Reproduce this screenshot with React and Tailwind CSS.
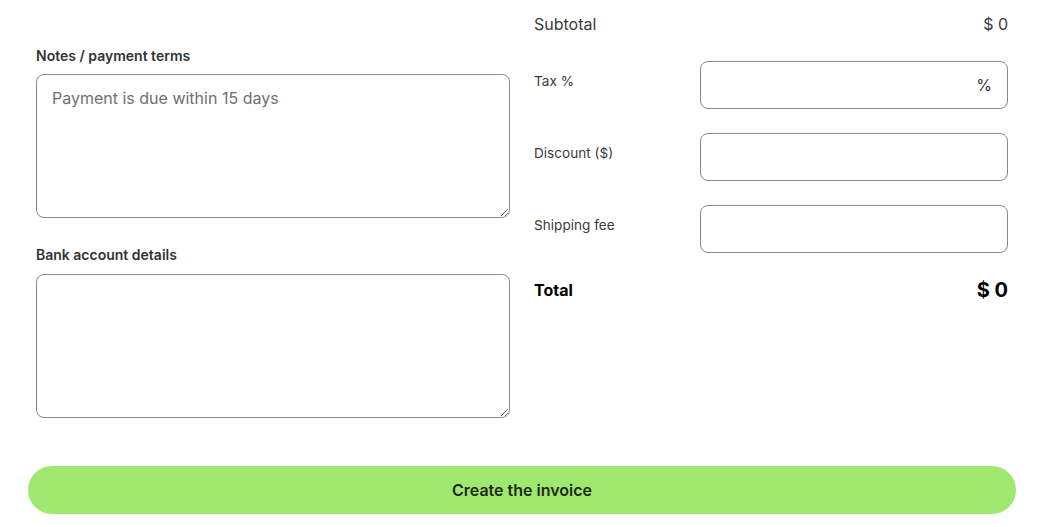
import { useState } from "react";

const font = { fontFamily: "Inter, 'Noto Sans', sans-serif" };

const FeeRow = ({ label, suffix, value, onChange }) => (
  <div className="flex items-start">
    <label className="w-[166px] shrink-0 pt-[10px] text-[13.6px] leading-5 text-[#3b3b3b]">{label}</label>
    <div className="relative flex-1">
      <input
        type="text"
        value={value}
        onChange={(e) => onChange(e.target.value)}
        className="block h-12 w-full rounded-lg border border-[#8a8a8a] bg-white px-4 text-base text-[#333] outline-none"
      />
      {suffix && (
        <span className="pointer-events-none absolute right-4 top-1/2 -translate-y-1/2 text-base text-[#333]">
          {suffix}
        </span>
      )}
    </div>
  </div>
);

export default function App() {
  const [notes, setNotes] = useState("");
  const [bank, setBank] = useState("");
  const [tax, setTax] = useState("");
  const [discount, setDiscount] = useState("");
  const [shipping, setShipping] = useState("");

  return (
    <div className="min-h-screen bg-white pl-7 pr-6" style={font}>
      <div className="grid grid-cols-2 gap-6 px-2">
        <div className="flex flex-col pt-[46px]">
          <label className="mb-2 text-sm font-semibold leading-5 text-[#333]">Notes / payment terms</label>
          <textarea
            value={notes}
            onChange={(e) => setNotes(e.target.value)}
            placeholder="Payment is due within 15 days"
            className="h-[144px] w-full rounded-lg border border-[#8a8a8a] px-[15px] py-[11px] text-base leading-6 text-[#333] outline-none placeholder:text-[#707070]"
          />
          <label className="mb-[9px] mt-[27px] text-sm font-semibold leading-5 text-[#333]">
            Bank account details
          </label>
          <textarea
            value={bank}
            onChange={(e) => setBank(e.target.value)}
            className="h-[144px] w-full rounded-lg border border-[#8a8a8a] px-[15px] py-[11px] text-base leading-6 text-[#333] outline-none"
          />
        </div>

        <div className="flex flex-col pt-3">
          <div className="flex items-center justify-between text-base leading-6 text-[#3b3b3b]">
            <span>Subtotal</span>
            <span>$ 0</span>
          </div>
          <div className="mt-[25px] flex flex-col gap-6">
            <FeeRow label="Tax %" suffix="%" value={tax} onChange={setTax} />
            <FeeRow label="Discount ($)" value={discount} onChange={setDiscount} />
            <FeeRow label="Shipping fee" value={shipping} onChange={setShipping} />
          </div>
          <div className="mt-[23px] flex items-center justify-between leading-6 text-black">
            <span className="text-base font-bold">Total</span>
            <span className="text-xl font-bold">$ 0</span>
          </div>
        </div>
      </div>

      <button
        type="button"
        className="mt-12 h-12 w-full rounded-full bg-[#a0e870] text-base font-semibold text-[#1c2b14]"
      >
        Create the invoice
      </button>
    </div>
  );
}
